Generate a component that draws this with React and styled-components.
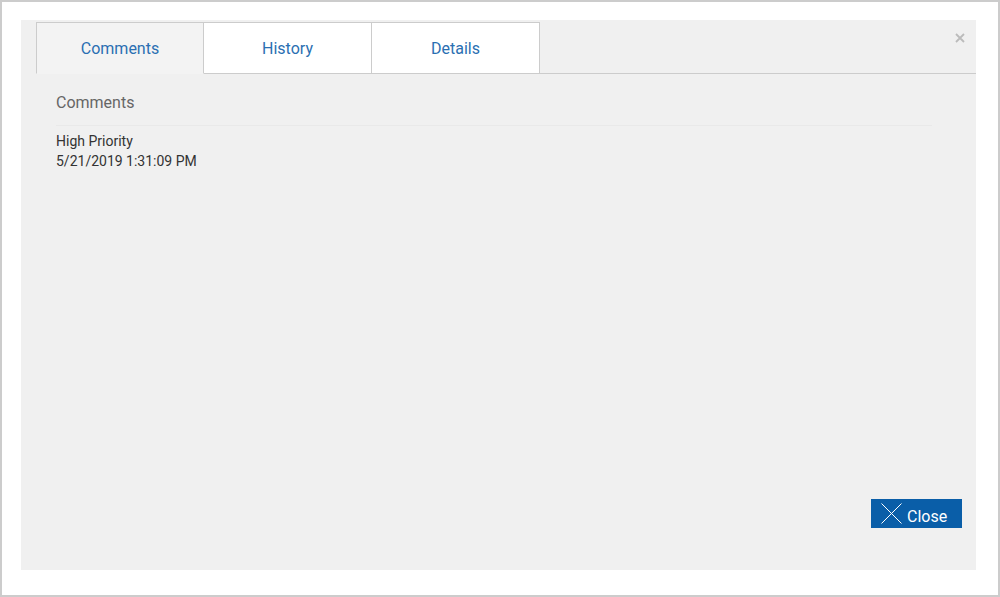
import React, { useState } from "react";
import styled, { createGlobalStyle } from "styled-components";

const Global = createGlobalStyle`
  html, body { margin: 0; padding: 0; background: #fff; }
  body { font-family: Roboto, "Liberation Sans", Arial, sans-serif; }
  * { box-sizing: border-box; }
`;

const Frame = styled.div`
  width: 1000px;
  height: 597px;
  border: 2px solid #cccccc;
  background: #ffffff;
  padding: 18px 22px 25px 19px;
  display: flex;
`;

const Dialog = styled.div`
  flex: 1;
  background: #f0f0f0;
  display: flex;
  flex-direction: column;
  position: relative;
  padding: 2px 0 0 15px;
`;

const TabBar = styled.div`
  display: flex;
  height: 52px;
  border-bottom: 1px solid #cccccc;
`;

const Tab = styled.button`
  width: ${(p) => p.$w}px;
  height: 52px;
  margin-bottom: -1px;
  border: 1px solid #cccccc;
  border-left-width: ${(p) => (p.$first ? 1 : 0)}px;
  border-bottom-color: ${(p) => (p.$active ? "#f3f3f3" : "#cccccc")};
  background: ${(p) => (p.$active ? "#f3f3f3" : "#ffffff")};
  color: #2a6fb2;
  font-family: Roboto, "Liberation Sans", Arial, sans-serif;
  font-size: 16px;
  padding: 1px 0 0;
  cursor: pointer;
  outline: none;
`;

const CloseX = styled.button`
  position: absolute;
  top: 11px;
  right: 9px;
  border: none;
  background: none;
  padding: 0;
  width: 14px;
  height: 14px;
  display: flex;
  align-items: center;
  justify-content: center;
  cursor: pointer;
`;

const Body = styled.div`
  flex: 1;
  display: flex;
  flex-direction: column;
  padding: 19px 44px 0 20px;
`;

const Heading = styled.div`
  font-size: 16px;
  color: #666666;
  line-height: 20px;
  padding-bottom: 12px;
  border-bottom: 1px solid #e9e9e9;
`;

const Entry = styled.div`
  padding-top: 5px;
  font-size: 14px;
  color: #333333;
  line-height: 20px;
`;

const Footer = styled.div`
  margin-top: auto;
  display: flex;
  justify-content: flex-end;
  padding: 0 14px 42px 0;
`;

const CloseButton = styled.button`
  width: 91px;
  height: 29px;
  border: none;
  background: #0a5ea8;
  color: #ffffff;
  font-family: Roboto, "Liberation Sans", Arial, sans-serif;
  font-size: 16px;
  display: flex;
  align-items: center;
  gap: 5px;
  padding: 0 0 0 10px;
  cursor: pointer;
`;

const ButtonLabel = styled.span`
  padding-top: 5px;
`;

const tabs = [
  { label: "Comments", w: 168 },
  { label: "History", w: 168 },
  { label: "Details", w: 168 },
];

export default function App() {
  const [active, setActive] = useState(0);
  return (
    <>
      <Global />
      <Frame>
        <Dialog>
          <TabBar>
            {tabs.map((t, i) => (
              <Tab
                key={t.label}
                $w={t.w}
                $first={i === 0}
                $active={i === active}
                onClick={() => setActive(i)}
              >
                {t.label}
              </Tab>
            ))}
          </TabBar>
          <CloseX aria-label="close">
            <svg width="10" height="10" viewBox="0 0 10 10">
              <path d="M1 1L9 9M9 1L1 9" stroke="#bbbbbb" strokeWidth="1.8" />
            </svg>
          </CloseX>
          <Body>
            <Heading>Comments</Heading>
            <Entry>
              <div>High Priority</div>
              <div>5/21/2019 1:31:09 PM</div>
            </Entry>
          </Body>
          <Footer>
            <CloseButton>
              <svg width="21" height="21" viewBox="0 0 21 21">
                <path d="M0.5 0.5L20.5 20.5M20.5 0.5L0.5 20.5" stroke="#ffffff" strokeWidth="1" />
              </svg>
              <ButtonLabel>Close</ButtonLabel>
            </CloseButton>
          </Footer>
        </Dialog>
      </Frame>
    </>
  );
}
